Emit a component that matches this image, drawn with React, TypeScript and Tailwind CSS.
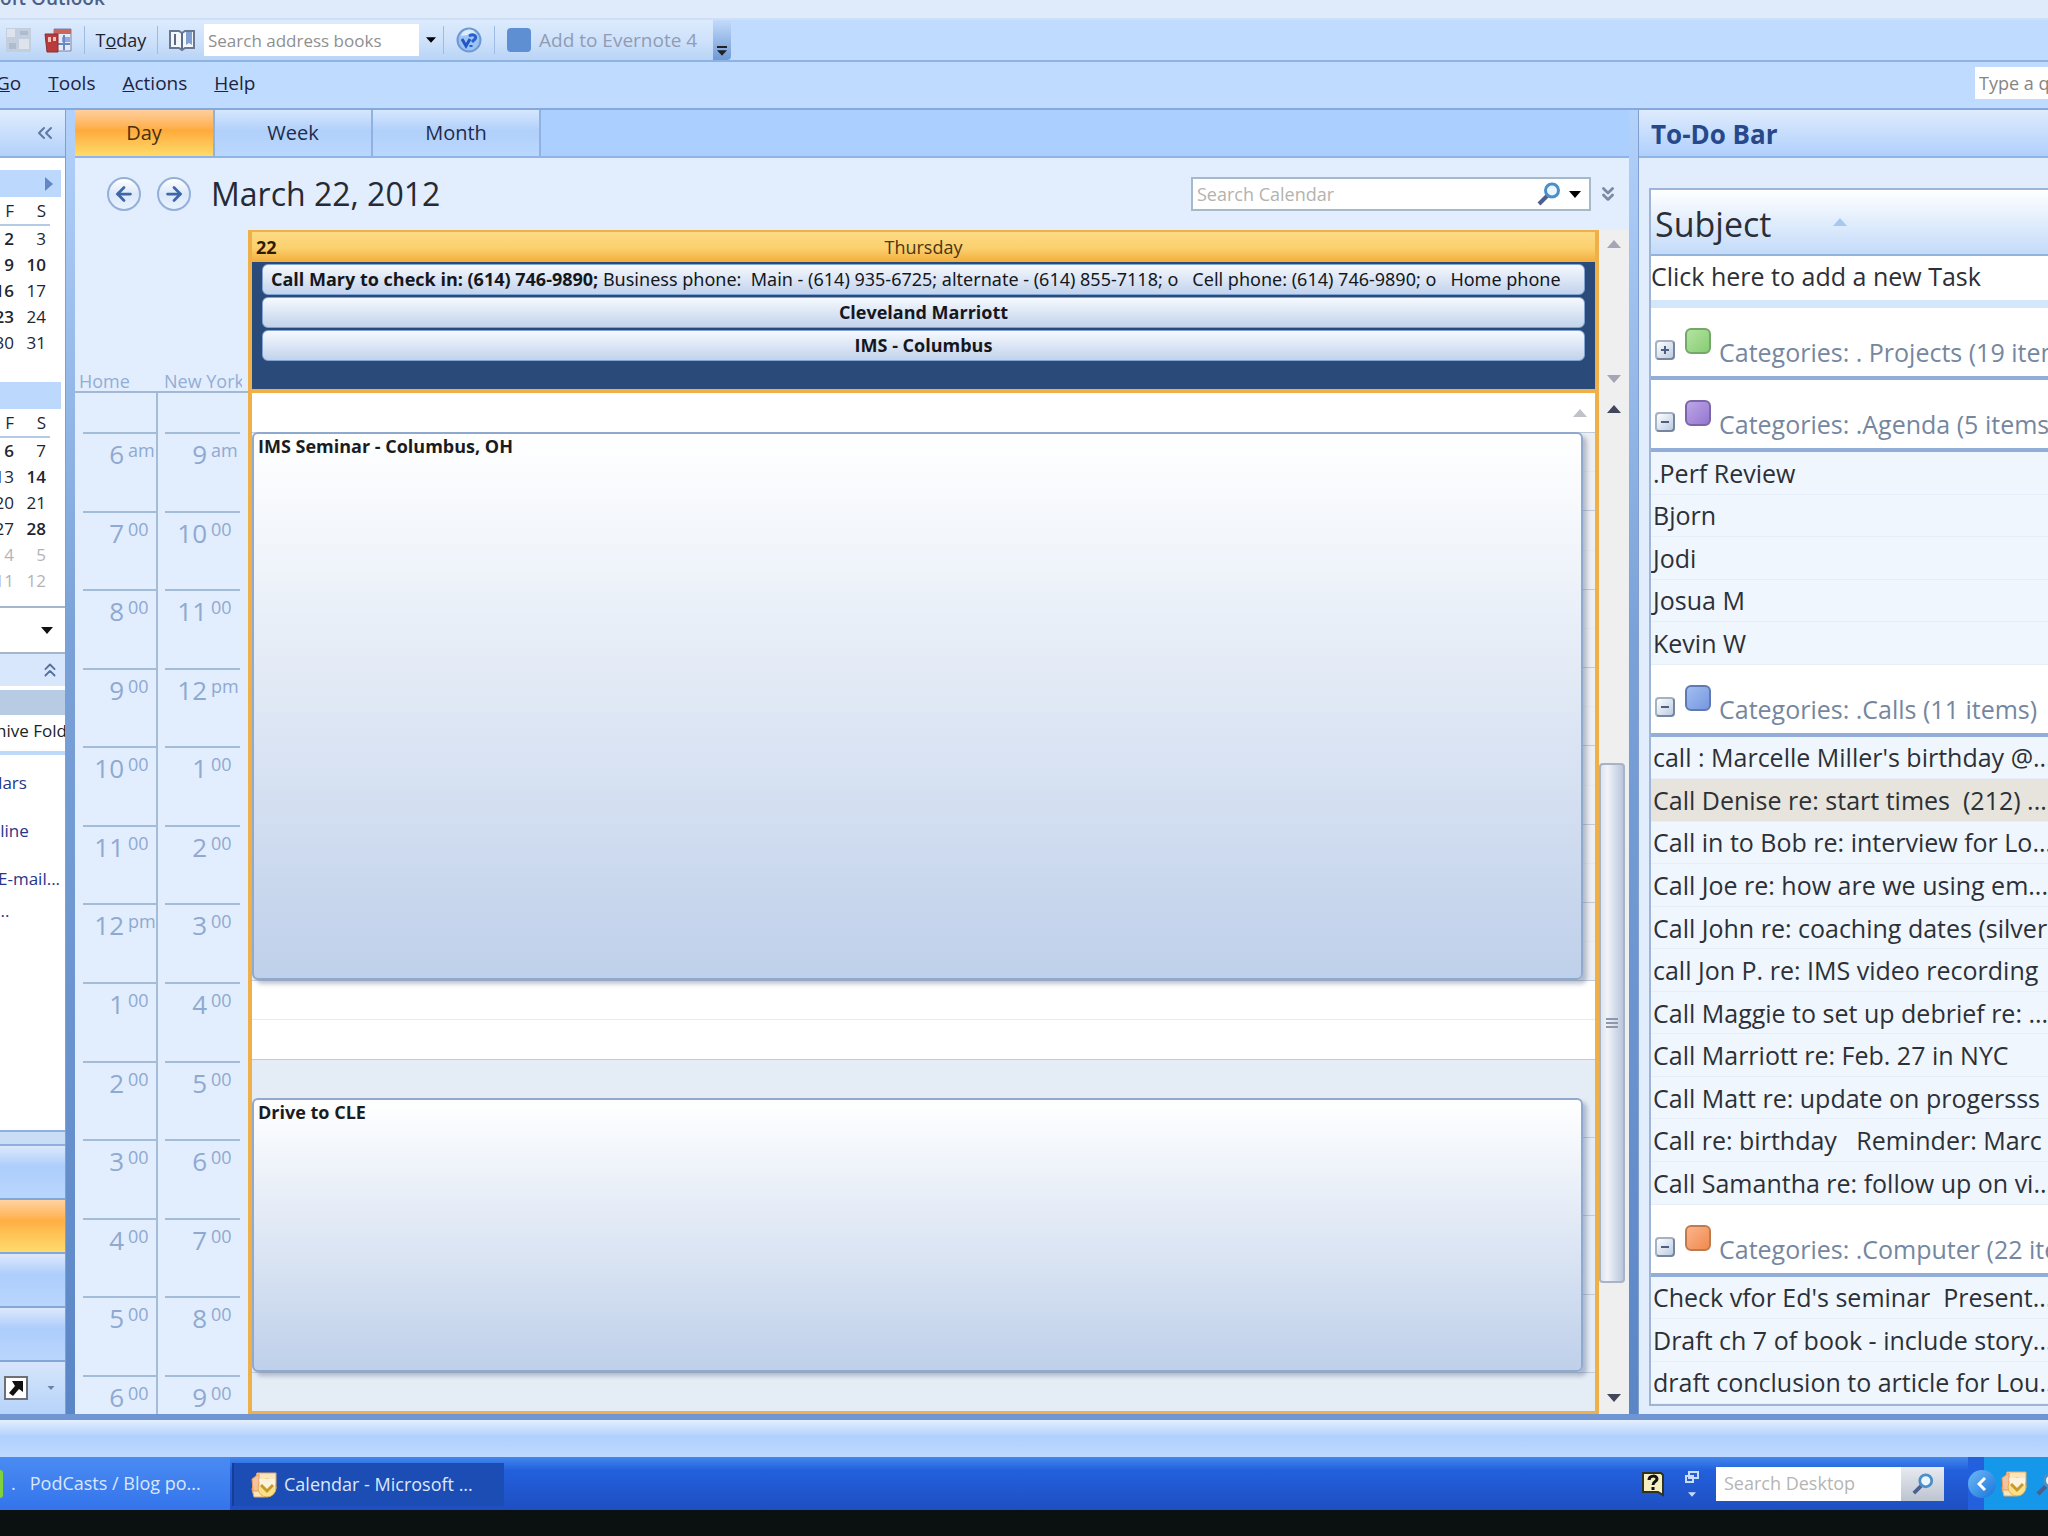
import React from "react";
import clsx from "clsx";
import { ArrowLeft, ArrowRight, ChevronsDown, ChevronsLeft, ChevronsUp } from "lucide-react";

interface Hour {
  home: string;
  homeSup: string;
  away: string;
  awaySup: string;
}

interface TaskGroup {
  name: string;
  open: boolean;
  swatch: string;
  items: string[];
}

const hours: Hour[] = [
  { home: "6", homeSup: "am", away: "9", awaySup: "am" },
  { home: "7", homeSup: "00", away: "10", awaySup: "00" },
  { home: "8", homeSup: "00", away: "11", awaySup: "00" },
  { home: "9", homeSup: "00", away: "12", awaySup: "pm" },
  { home: "10", homeSup: "00", away: "1", awaySup: "00" },
  { home: "11", homeSup: "00", away: "2", awaySup: "00" },
  { home: "12", homeSup: "pm", away: "3", awaySup: "00" },
  { home: "1", homeSup: "00", away: "4", awaySup: "00" },
  { home: "2", homeSup: "00", away: "5", awaySup: "00" },
  { home: "3", homeSup: "00", away: "6", awaySup: "00" },
  { home: "4", homeSup: "00", away: "7", awaySup: "00" },
  { home: "5", homeSup: "00", away: "8", awaySup: "00" },
];

const groups: TaskGroup[] = [
  {
    name: "Categories: . Projects (19 items)",
    open: false,
    swatch: "from-[#b5e3a0] to-[#86cd74] border-[#74a868]",
    items: [],
  },
  {
    name: "Categories: .Agenda (5 items)",
    open: true,
    swatch: "from-[#bda6e6] to-[#9577d0] border-[#7a66a8]",
    items: [".Perf Review", "Bjorn", "Jodi", "Josua M", "Kevin W"],
  },
  {
    name: "Categories: .Calls (11 items)",
    open: true,
    swatch: "from-[#a3bdf0] to-[#7698e0] border-[#6079b4]",
    items: [
      "call : Marcelle Miller's birthday @...",
      "Call Denise re: start times  (212) ...",
      "Call in to Bob re: interview for Lo...",
      "Call Joe re: how are we using em...",
      "Call John re: coaching dates (silver",
      "call Jon P. re: IMS video recording",
      "Call Maggie to set up debrief re: ...",
      "Call Marriott re: Feb. 27 in NYC",
      "Call Matt re: update on progersss",
      "Call re: birthday   Reminder: Marc",
      "Call Samantha re: follow up on vi...",
    ],
  },
  {
    name: "Categories: .Computer (22 items)",
    open: true,
    swatch: "from-[#fbb48a] to-[#f08a4e] border-[#c07a50]",
    items: [
      "Check vfor Ed's seminar  Present...",
      "Draft ch 7 of book - include story...",
      "draft conclusion to article for Lou...",
    ],
  },
];

const march = [["2", "3"], ["9", "10"], ["16", "17"], ["23", "24"], ["30", "31"]];
const april = [["6", "7"], ["13", "14"], ["20", "21"], ["27", "28"], ["4", "5"], ["11", "12"]];
const boldDays = ["m2", "m9", "m10", "m16", "m23", "a6", "a14", "a28"];

const Triangle: React.FC<{ up?: boolean; className?: string }> = ({ up, className = "h-2 w-3.5" }) => (
  <svg viewBox="0 0 14 8" className={clsx("shrink-0", className)} fill="currentColor" aria-hidden="true">
    <path d={up ? "M0 8 7 0l7 8z" : "M0 0h14L7 8z"} />
  </svg>
);

const Lens: React.FC<{ className?: string }> = ({ className }) => (
  <svg viewBox="0 0 24 24" className={className} fill="none" aria-hidden="true">
    <path d="M2 22 10 14" stroke="#4d5f8c" strokeWidth="4" />
    <circle cx="15" cy="8.500" r="6.500" fill="#eaf5fd" stroke="#4a8fc8" strokeWidth="3" />
  </svg>
);

const OutlookIcon: React.FC<{ className?: string }> = ({ className }) => (
  <svg viewBox="0 0 28 28" className={className} aria-hidden="true">
    <path d="M7 2h19v15l-3 5-8 4H4L2 18z" fill="#fbe6bb" stroke="#e8a860" />
    <path d="M2 8 9 3v17H3z" fill="#f3c3a0" stroke="#e39a62" />
    <circle cx="17" cy="17" r="9" fill="#fbe08a" stroke="#e5ac4c" />
    <path d="M9 8h16v7l-7 5-8-5z" fill="#fdf3dc" />
    <path d="m11 14 6 6 6-6" fill="none" stroke="#c89a2c" strokeWidth="3" />
  </svg>
);

const Separator = () => <span className="h-7 w-px bg-[#9ebbe3]" />;

const Toolbar = () => (
  <div className="flex h-[42px] border-b-2 border-[#8db3e4]">
    <div className="flex items-center bg-linear-to-b from-[#dcebfe] via-[#cfe2fb] to-[#b9d4f6] pl-1">
      <svg viewBox="0 0 28 28" className="h-7 w-7" aria-hidden="true">
        <rect x="2" y="2" width="25" height="24" fill="#c3cfdf" />
        <path d="M3 3h8v8H3zM15 13h10v10H15z" fill="#dde4ec" />
        <path d="M5 17h7v6H5zM16 5h8v4h-8z" fill="#aebccd" />
      </svg>
      <svg viewBox="0 0 28 28" className="ml-3 h-7 w-7" aria-hidden="true">
        <path d="M10 3h17v22H10z" fill="#e4ebf8" stroke="#7b83ad" />
        <path d="M10 3h17v5H10z" fill="#c9675f" />
        <path d="M18 11h8v5h-8z" fill="#8ea9e0" />
        <path d="M14 18h12M20 9v15" stroke="#6c86c4" strokeWidth="2" />
        <path d="M1 8h13v18H3z" fill="#b93a38" stroke="#8a2e34" />
        <path d="M4 11h3v5H4zM9 11h3v4H9z" fill="#efc4bd" />
      </svg>
      <span className="ml-3 flex items-center gap-2.5">
        <Separator />
        <button className="w-[52px] text-center text-[18px]">T<u>o</u>day</button>
        <Separator />
      </span>
      <svg viewBox="0 0 28 24" className="ml-2.5 h-6 w-7" aria-hidden="true">
        <path d="M2 3h9l3 2 3-2h9v17h-9l-3 2-3-2H2z" fill="#f2f7fd" stroke="#6a7791" strokeWidth="2" />
        <path d="M14 5v16M7 6v11" stroke="#5d6a86" strokeWidth="2" />
        <path d="M18 4h6v13l-3-2-3 2z" fill="#7fa0d0" />
      </svg>
      <input
        aria-label="Search address books"
        placeholder="Search address books"
        className="ml-2 h-8 w-[215px] bg-white px-1 text-[17px] outline-none placeholder:text-[#8f8f8f]"
      />
      <button aria-label="Address book list" className="flex h-8 w-6 items-center justify-center text-black">
        <Triangle className="h-1.5 w-2.5" />
      </button>
      <Separator />
      <svg viewBox="0 0 26 26" className="mx-3 h-[26px] w-[26px]" aria-hidden="true">
        <circle cx="13" cy="13" r="11.500" fill="#9cc3f1" stroke="#6e98d3" strokeWidth="2" />
        <path d="M5 9a8 8 0 0 1 15-2z" fill="#d9ebfd" />
        <path d="m6 12 4 7 4-7" fill="none" stroke="#1f56c8" strokeWidth="3" />
        <path d="M13 9c5-3 9 1 5 4l-2 2m-1 3v2" fill="none" stroke="#2560cf" strokeWidth="3" />
      </svg>
      <Separator />
      <button className="flex items-center gap-2 pr-4 pl-3 text-[19px] text-[#8f9cb4]">
        <span className="h-6 w-6 rounded-sm bg-[#5e8fd2]" />
        Add to Evernote 4
      </button>
    </div>
    <button
      aria-label="Toolbar options"
      className="flex w-[18px] flex-col items-center justify-end gap-0.5 rounded-r bg-linear-to-b from-[#c3dbfa] to-[#6f9ad6] pb-1 text-[#222]"
    >
      <span className="h-0.5 w-2.5 bg-current" />
      <Triangle className="h-1.5 w-2.5" />
    </button>
  </div>
);

const MenuBar = () => (
  <div className="flex h-[46px] items-center pb-1 text-[19px] text-[#1c2340]">
    <nav className="-ml-1 flex gap-[27px]">
      <a href="#go"><u>G</u>o</a>
      <a href="#tools"><u>T</u>ools</a>
      <a href="#actions"><u>A</u>ctions</a>
      <a href="#help"><u>H</u>elp</a>
    </nav>
    <input
      aria-label="Type a question for help"
      placeholder="Type a question"
      className="ml-auto h-8 w-[73px] bg-white pl-1 text-[18px] outline-none placeholder:text-[#858585]"
    />
  </div>
);

const MiniMonth: React.FC<{ id: string; weeks: string[][]; mutedFrom?: number }> = ({ id, weeks, mutedFrom = 99 }) => (
  <table className="ml-[-14px] w-16 table-fixed text-right text-[17px]">
    <thead>
      <tr className="h-7 border-b-2 border-[#b4cbe8]">
        <th className="pr-1 font-normal">F</th>
        <th className="pr-1 font-normal">S</th>
      </tr>
    </thead>
    <tbody>
      {weeks.map((week, i) => (
        <tr key={i} className={clsx("h-[26px] leading-[26px]", i >= mutedFrom && "text-[#b4b4b4]")}>
          {week.map((day) => (
            <td key={day} className={clsx("pr-1", boldDays.includes(id + day) && i < mutedFrom && "font-semibold")}>
              {day}
            </td>
          ))}
        </tr>
      ))}
    </tbody>
  </table>
);

const navButton = "h-[54px] shrink-0 border-b-2 border-[#83a7d8]";
const navBlue = "bg-linear-to-b from-[#dce8fc] via-[#adcdfb] via-40% to-[#b9d6fe]";

const NavigationPane = () => (
  <aside className="flex w-[66px] shrink-0 flex-col overflow-hidden border-r border-[#7f9fd0] bg-white">
    <div className="flex h-12 shrink-0 items-center justify-end border-b-2 border-[#8fb2e2] bg-linear-to-b from-[#e0edfe] to-[#b3d1fa] pr-2">
      <button aria-label="Minimize the Navigation Pane" className="text-[#5f79a4]">
        <ChevronsLeft size={24} strokeWidth={2} />
      </button>
    </div>
    <div className="mt-3 mr-1 flex h-[27px] shrink-0 items-center justify-end bg-[#bcd8fd] pr-2">
      <button aria-label="Next month">
        <svg viewBox="0 0 8 14" className="h-3.5 w-2" fill="#6488c4"><path d="M0 0l8 7-8 7z" /></svg>
      </button>
    </div>
    <MiniMonth id="m" weeks={march} />
    <div className="mt-[26px] mr-1 h-[27px] shrink-0 bg-[#bcd8fd]" />
    <MiniMonth id="a" weeks={april} mutedFrom={4} />
    <div className="mt-3 flex h-12 shrink-0 items-center justify-end border-y-2 border-[#a3b7cc] pr-3 text-[#111]">
      <Triangle className="h-[7px] w-3" />
    </div>
    <div className="flex h-8 shrink-0 items-center justify-end bg-[#d8e7fb] pr-1 text-[#54709c]">
      <ChevronsUp size={22} />
    </div>
    <div className="mt-1 h-[25px] shrink-0 bg-[#b8cbe5]" />
    <p className="-ml-1 h-10 shrink-0 border-b-4 border-[#bedafa] text-[17px] leading-8 whitespace-nowrap text-[#222]">hive Folders</p>
    <div className="flex flex-1 flex-col items-start text-[17px] leading-6 whitespace-nowrap text-[#27358c]">
      <a href="#calendars" className="-ml-2 pt-4">dars</a>
      <a href="#online" className="-ml-1 pt-6">lline</a>
      <a href="#email" className="-ml-0.5 pt-6">E-mail...</a>
      <a href="#more" className="-ml-1 pt-2">...</a>
    </div>
    <div className="h-4 shrink-0 border-y-2 border-[#8fb0dc] bg-[#c9ddf7]" />
    <button aria-label="Mail" className={clsx(navButton, navBlue)} />
    <button aria-label="Calendar" className={clsx(navButton, "bg-linear-to-b from-[#ffd3a0] via-[#ffaf42] via-40% to-[#ffdc6e]")} />
    <button aria-label="Contacts" className={clsx(navButton, navBlue)} />
    <button aria-label="Tasks" className={clsx(navButton, navBlue)} />
    <div className="flex h-[52px] shrink-0 items-center justify-between bg-linear-to-b from-[#d6e6fb] to-[#b6d3fa] pr-2.5 pl-1">
      <button aria-label="Shortcuts">
        <svg viewBox="0 0 24 24" className="h-6 w-6" aria-hidden="true">
          <rect x="1" y="1" width="22" height="22" fill="#fff" stroke="#6e7078" strokeWidth="2" />
          <path d="M8 5h11v11l-4-3-6 7-4-3 6-7z" fill="#111" />
        </svg>
      </button>
      <Triangle className="h-1 w-2 text-[#6c83a8]" />
    </div>
  </aside>
);

const Gutter = () => (
  <div className="w-[9px] shrink-0 bg-linear-to-b from-[#b3d2fb] via-[#7ba2d8] via-40% to-[#5b86c6]" />
);

const tab = "border-r-2 border-[#8fb2e0] bg-linear-to-b";
const idleTab = "from-[#d6e7fe] via-[#b1d0fa] via-45% to-[#bad8fe]";

const ViewTabs = () => (
  <div role="tablist" className="flex h-12 shrink-0 border-b-2 border-[#8fb5e8] bg-[#abcffe] text-[20px] text-[#1f2b4c]">
    <button role="tab" aria-selected="true" className={clsx(tab, "w-[140px] from-[#ffcf9c] via-[#ffab3b] via-45% to-[#ffdb69] text-[#4a2f10]")}>Day</button>
    <button role="tab" aria-selected="false" className={clsx(tab, idleTab, "w-[158px]")}>Week</button>
    <button role="tab" aria-selected="false" className={clsx(tab, idleTab, "w-[168px]")}>Month</button>
  </div>
);

const roundButton =
  "flex h-[34px] w-[34px] items-center justify-center rounded-full border-2 border-[#94afd8] bg-linear-to-b from-white via-[#dbe8fa] to-[#e9f3ff] text-[#3f66a8]";

const DateHeader = () => (
  <div className="flex h-[72px] shrink-0 items-center pr-2.5 pl-8">
    <button aria-label="Back" className={roundButton}><ArrowLeft size={22} strokeWidth={3} /></button>
    <button aria-label="Forward" className={clsx(roundButton, "ml-4")}><ArrowRight size={22} strokeWidth={3} /></button>
    <h1 className="ml-5 text-[32px] text-[#262a35]">March 22, 2012</h1>
    <div className="ml-auto flex h-[34px] w-[400px] items-center border-2 border-[#a5b9cc] bg-white">
      <input
        aria-label="Search Calendar"
        placeholder="Search Calendar"
        className="min-w-0 flex-1 pl-1 text-[18px] outline-none placeholder:text-[#b3b3ae]"
      />
      <button aria-label="Search"><Lens className="h-6 w-6" /></button>
      <button aria-label="Search options" className="px-2 text-black"><Triangle className="h-[7px] w-3" /></button>
    </div>
    <button aria-label="Expand query builder" className="ml-1.5 text-[#7b8ba3]"><ChevronsDown size={22} strokeWidth={3} /></button>
  </div>
);

const TimeColumns = () => (
  <div className="flex w-[173px] shrink-0 flex-col">
    <div className="flex h-[163px] items-end border-b-2 border-[#a0b8d6] text-[18px] leading-5 text-[#93add3]">
      <span className="w-[83px] pl-1">Home</span>
      <span className="w-[84px] overflow-hidden pl-1.5 whitespace-nowrap">New York</span>
    </div>
    <div className="grid min-h-0 flex-1 grid-cols-[83px_90px] grid-rows-[repeat(26,minmax(0,1fr))] overflow-hidden text-[26px] leading-8 text-[#8fa9d0]">
      <div className="border-r-2 border-[#a3bcd8]" />
      <div />
      {[...hours, { home: "6", homeSup: "00", away: "9", awaySup: "00" }].map((h, i) => (
        <React.Fragment key={i}>
          <div className={clsx("flex border-r-2 border-[#a3bcd8] pl-2", i < 12 && "row-span-2")}>
            <div className="flex flex-1 border-t-2 border-[#a3bcd8]">
              <span className="w-[41px] pt-1 text-right">{h.home}</span>
              <span className="pl-1 text-[18px]">{h.homeSup}</span>
            </div>
          </div>
          <div className={clsx("flex pr-2 pl-[7px]", i < 12 && "row-span-2")}>
            <div className="flex flex-1 border-t-2 border-[#a3bcd8]">
              <span className="w-[42px] pt-1 text-right">{h.away}</span>
              <span className="pl-1 text-[18px]">{h.awaySup}</span>
            </div>
          </div>
        </React.Fragment>
      ))}
    </div>
  </div>
);

const allDay =
  "mx-2.5 h-[31px] overflow-hidden rounded-md border border-[#7fa3d3] bg-linear-to-b from-[#f6f9fe] to-[#c2d3ec] px-2 text-[18px] leading-7 whitespace-pre text-[#15171c]";
const eventCard =
  "z-10 col-start-1 mr-3 rounded-md border-2 border-[#8fa9cf] bg-linear-to-b from-white to-[#bfd0ea] px-1 text-[18px] leading-6 font-bold text-[#1a1c22] shadow-[4px_4px_4px_rgba(70,90,130,0.35)]";

const DayColumn = () => (
  <section className="flex min-w-0 flex-1 flex-col border-4 border-t-2 border-b-3 border-[#efb04a]">
    <header className="grid h-[30px] shrink-0 grid-cols-[1fr_auto_1fr] items-center bg-linear-to-b from-[#fddb84] via-[#fbcf6c] via-55% to-[#f2ae3a] text-[18px] text-[#4b3512]">
      <b className="pl-1 text-[#2c1d05]">22</b>
      <span>Thursday</span>
    </header>
    <div className="flex h-[131px] shrink-0 flex-col gap-0.5 border-b-4 border-[#efb04a] bg-[#2a4a7a] pt-0.5">
      <div className={allDay}>
        <b>Call Mary to check in: (614) 746-9890;</b>
        <span className="font-['Noto_Sans',sans-serif]">{" Business phone:  Main - (614) 935-6725; alternate - (614) 855-7118; o   Cell phone: (614) 746-9890; o   Home phone"}</span>
      </div>
      <div className={clsx(allDay, "text-center font-bold")}>Cleveland Marriott</div>
      <div className={clsx(allDay, "text-center font-bold")}>IMS - Columbus</div>
    </div>
    <div className="grid min-h-0 flex-1 grid-cols-1 grid-rows-[repeat(26,minmax(0,1fr))] bg-white">
      {Array.from({ length: 26 }, (_, i) => (
        <div
          key={i}
          style={{ gridRow: i + 1, gridColumn: 1 }}
          className={clsx(
            "border-t",
            i === 0 && "flex items-center justify-end border-white pr-2 text-[#bfc2c8]",
            i % 2 === 1 && "border-[#c2cbdb]",
            i > 0 && i % 2 === 0 && "border-[#e6eaf1]",
            i > 0 && i < 15 && "bg-[#eeeff2]",
            i > 16 && "bg-[#e4ecf6]"
          )}
        >
          {i === 0 && <Triangle up />}
        </div>
      ))}
      <article className={clsx(eventCard, "row-start-2 row-end-16")}>IMS Seminar - Columbus, OH</article>
      <article className={clsx(eventCard, "row-start-19 row-end-26")}>Drive to CLE</article>
    </div>
  </section>
);

const ScrollBars = () => (
  <div className="flex w-[30px] shrink-0 flex-col bg-[#efeff0]">
    <div className="flex h-[163px] flex-col items-center justify-between py-2.5 text-[#a3a6b4]">
      <Triangle up />
      <Triangle />
    </div>
    <div className="flex flex-1 flex-col items-center gap-3 py-3 text-[#41465c]">
      <Triangle up />
      <div className="flex w-full flex-1 flex-col">
        <div className="flex-[34]" />
        <div className="mr-1 flex flex-[52] flex-col items-center justify-center gap-0.5 rounded-sm border-2 border-[#a9b3c6] bg-linear-to-r from-[#dfe4ee] via-[#f0f3f8] via-30% to-[#b9c6dc]">
          <span className="h-0.5 w-3 bg-[#8f98ab]" />
          <span className="h-0.5 w-3 bg-[#8f98ab]" />
          <span className="h-0.5 w-3 bg-[#8f98ab]" />
        </div>
        <div className="flex-[10]" />
      </div>
      <Triangle />
    </div>
  </div>
);

const ToDoBar = () => (
  <aside className="flex w-[410px] shrink-0 flex-col overflow-hidden border-l border-[#7f9fd0] bg-[#e1edfd]">
    <h2 className="h-12 shrink-0 border-b-2 border-[#8fb5e8] bg-linear-to-b from-[#dfebfd] to-[#afd0fc] pl-3 text-[26px] leading-[48px] font-bold text-[#27488a]">
      To-Do Bar
    </h2>
    <table className="mt-[30px] mb-2 ml-2.5 flex min-h-0 flex-1 flex-col overflow-hidden border-2 border-r-0 border-[#9db6d8] bg-white">
      <thead className="shrink-0">
        <tr className="flex h-[66px] items-center border-b-2 border-[#93b2dc] bg-linear-to-b from-white to-[#c3dbf9]">
          <th className="pt-1 pl-1 text-[34px] font-normal text-[#2b2e36]">Subject</th>
          <th className="pl-[62px] text-[#a6c8f4]" aria-label="Sorted ascending"><Triangle up /></th>
        </tr>
      </thead>
      <tbody className="flex min-h-0 flex-1 flex-col text-[25px] whitespace-pre text-[#2d3036]">
        <tr className="flex h-[52px] shrink-0 border-b-8 border-[#d3e6fa] leading-10">
          <td>Click here to add a new Task</td>
        </tr>
        {groups.map((group) => (
          <React.Fragment key={group.name}>
            <tr className="flex h-[72px] shrink-0 overflow-hidden border-b-4 border-[#92aed8]">
              <td className="flex items-end pb-2 pl-1 text-[#75879f]">
                <button
                  aria-label={group.open ? "Collapse group" : "Expand group"}
                  className="mb-2 flex h-5 w-5 shrink-0 items-center justify-center rounded-sm border-2 border-[#a5b2c4] border-r-[#7786a0] border-b-[#7786a0] bg-linear-to-br from-white to-[#bccbe0]"
                >
                  <svg viewBox="0 0 10 10" className="h-2.5 w-2.5" stroke="#4b5f85" strokeWidth="2">
                    <path d={group.open ? "M1 5h8" : "M1 5h8M5 1v8"} />
                  </svg>
                </button>
                <span className={clsx("mb-3.5 ml-2.5 h-[26px] w-[26px] shrink-0 rounded-md border-2 bg-linear-to-br", group.swatch)} />
                <span className="ml-2 shrink-0 leading-8">{group.name}</span>
              </td>
            </tr>
            {group.items.map((item) => (
              <tr
                key={item}
                className={clsx(
                  "flex min-h-0 flex-1 items-center border-b border-[#e6eff9] leading-8",
                  item.startsWith("Call Denise") ? "bg-[#e6e4dc]" : "bg-[#eff6fe]"
                )}
              >
                <td className="pl-0.5">{item}</td>
              </tr>
            ))}
          </React.Fragment>
        ))}
      </tbody>
    </table>
  </aside>
);

const Taskbar = () => (
  <footer className="flex h-[53px] shrink-0 items-stretch overflow-hidden bg-linear-to-b from-[#4387ec] via-[#2360dd] via-25% to-[#1e4fc2] text-[18px] text-[#dbe7fb]">
    <button className="flex w-[230px] items-center bg-linear-to-b from-[#4a8bf2] to-[#3474ec]">
      <span className="h-7 w-[3px] rounded-r bg-[#7fd23c]" />
      <span className="ml-2">.</span>
      <span className="ml-3.5">PodCasts / Blog po...</span>
    </button>
    <button className="mt-1.5 mb-1 ml-0.5 flex w-[272px] items-center border-l-2 border-[#163e98] bg-[#1c4db4] pl-4">
      <OutlookIcon className="h-7 w-7" />
      <span className="ml-1.5">Calendar - Microsoft ...</span>
    </button>
    <div className="ml-auto flex items-center">
      <svg viewBox="0 0 22 26" className="h-[26px] w-[22px]" aria-hidden="true">
        <path d="M1 2h18l2 2v20l-5-3H1z" fill="#f5f0bf" stroke="#30321e" strokeWidth="2" />
        <path d="M7 9c0-5 8-5 8-1 0 3-4 2-4 6m0 2v3" fill="none" stroke="#111" strokeWidth="3" />
      </svg>
      <div className="ml-5 flex flex-col items-center gap-2 text-[#c8dcfb]">
        <svg viewBox="0 0 16 14" className="h-3.5 w-4" fill="none" stroke="currentColor" strokeWidth="2">
          <path d="M5 2h9v6H5zM2 6h7v6H2z" />
        </svg>
        <Triangle className="h-[5px] w-2" />
      </div>
      <div className="ml-4 flex h-[34px]">
        <input
          aria-label="Search Desktop"
          placeholder="Search Desktop"
          className="w-[185px] bg-white pl-2 text-[18px] outline-none placeholder:text-[#b5b5b5]"
        />
        <button aria-label="Search" className="flex w-[43px] items-center justify-center bg-linear-to-b from-[#e8ebf0] to-[#bcc4d0]">
          <Lens className="h-[22px] w-[22px]" />
        </button>
      </div>
      <div className="ml-6 flex h-full items-center bg-linear-to-r from-[#2360dd] from-20% to-[#1597ea] to-20%">
        <button aria-label="Show hidden icons" className="flex h-7 w-7 items-center justify-center rounded-full bg-linear-to-br from-[#6db9f8] to-[#0f74d8]">
          <svg viewBox="0 0 10 14" className="h-3.5 w-2.5" fill="none" stroke="#fff" strokeWidth="3"><path d="M8 1 2 7l6 6" /></svg>
        </button>
        <OutlookIcon className="ml-1 h-7 w-7" />
        <span className="ml-2 w-3 overflow-hidden"><Lens className="h-6 w-6" /></span>
      </div>
    </div>
  </footer>
);

const App: React.FC = () => (
  <div className="flex h-screen flex-col overflow-hidden bg-[#bfdbff] font-['Open_Sans','Noto_Sans',sans-serif] text-[#1f2430]">
    <div className="h-5 shrink-0 overflow-hidden border-b-2 border-[#cfe0f6] bg-[#dfebfb]">
      <p className="-mt-3.5 text-[19px] leading-6 font-semibold text-[#4c5f86]">oft Outlook</p>
    </div>
    <Toolbar />
    <MenuBar />
    <div className="flex min-h-0 flex-1 border-t-2 border-b-6 border-t-[#86a9dc] border-b-[#6f96d2]">
      <NavigationPane />
      <Gutter />
      <main className="flex min-w-0 flex-1 flex-col bg-[#e2eefe]">
        <ViewTabs />
        <DateHeader />
        <div className="flex min-h-0 flex-1">
          <TimeColumns />
          <DayColumn />
          <ScrollBars />
        </div>
      </main>
      <Gutter />
      <ToDoBar />
    </div>
    <div className="h-[37px] shrink-0 bg-linear-to-b from-[#e4effe] via-[#b0d0fd] via-45% to-[#bedaff]" />
    <Taskbar />
    <div className="h-[26px] shrink-0 bg-[#0b1110]" />
  </div>
);

export default App;
